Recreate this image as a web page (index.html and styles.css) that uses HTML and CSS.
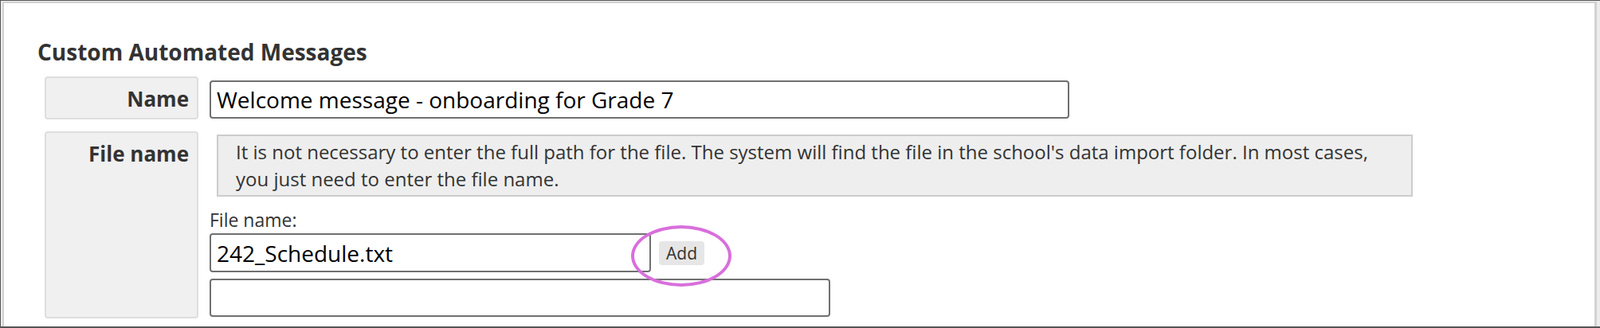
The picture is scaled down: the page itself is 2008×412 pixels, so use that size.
FILE: index.html
```html
<!DOCTYPE html>
<html lang="en">
<head>
    <meta charset="UTF-8">
    <title>Custom Automated Messages</title>
    <link rel="stylesheet" href="styles.css">
</head>
<body>
<div class="screen">
    <div class="panel">
        <h2 class="title">Custom Automated Messages</h2>
        <div class="form">
            <!--name row-->
            <div class="label name-label">Name</div>
            <div class="field name-field">
                <input type="text" class="text-input name-input" value="Welcome message - onboarding for Grade 7">
            </div>
            <!--file name row-->
            <div class="label file-label">File name</div>
            <div class="field file-field">
                <div class="hint">It is not necessary to enter the full path for the file. The system will find the file in the school's data import folder. In most cases, you just need to enter the file name.</div>
                <div class="sub-label">File name:</div>
                <div class="file-row">
                    <input type="text" class="text-input file-input" value="242_Schedule.txt">
                    <span class="add-wrap">
                        <button class="add-btn">Add</button>
                        <span class="ring"></span>
                    </span>
                </div>
                <input type="text" class="text-input extra-input" value="">
            </div>
        </div>
    </div>
</div>
</body>
</html>
```

FILE: styles.css
```css
*{
    margin: 0;
    padding: 0;
    box-sizing: border-box;
    font-family: "Open Sans", "Noto Sans", sans-serif;
}
body{
    background: #eeeeee;
    overflow: hidden;
}
.screen{
    width: 2008px;
    height: 412px;
    border-top: 1px solid #555;
    border-left: 1px solid #555;
    border-bottom: 2px solid #555;
    padding: 1px 0 0 2px;
    background: #ececec;
}
.panel{
    width: 2001px;
    height: 100%;
    background: #fff;
    border-top: 2px solid #d2d2d2;
    border-left: 2px solid #d2d2d2;
    border-right: 3px solid #d2d2d2;
    padding: 42px 0 0 42px;
}
.title{
    font-size: 28px;
    line-height: 39px;
    font-weight: 700;
    color: #333;
}
.form{
    display: grid;
    grid-template-columns: 193px 1fr;
    column-gap: 14px;
    row-gap: 15px;
    margin: 11px 0 0 9px;
}
.label{
    background: #f0f0f0;
    border: 2px solid #dedede;
    border-radius: 4px;
    text-align: right;
    padding: 13px 10px 0 0;
    font-size: 26px;
    line-height: 26px;
    font-weight: 700;
    color: #333;
}
.name-label{
    height: 54px;
}
.file-label{
    height: 235px;
}
.name-field{
    padding-top: 5px;
}
.text-input{
    display: block;
    height: 48px;
    border: 2px solid #707070;
    border-radius: 4px;
    padding: 0 7px;
    font-size: 28px;
    color: #000;
    background: #fff;
    outline: none;
}
.name-input{
    width: 1079px;
}
.file-field{
    padding-top: 4px;
}
.hint{
    width: 1501px;
    margin-left: 9px;
    background: #eeeeee;
    border: 2px solid #cccccc;
    padding: 3px 22px 0;
    height: 78px;
    font-size: 24px;
    line-height: 34px;
    color: #333;
}
.sub-label{
    margin-top: 12px;
    font-size: 23px;
    line-height: 34px;
    color: #333;
}
.file-row{
    display: flex;
    align-items: center;
    gap: 10px;
}
.file-input{
    width: 554px;
    height: 49px;
}
.add-wrap{
    position: relative;
    display: inline-block;
}
.add-btn{
    display: block;
    width: 57px;
    height: 30px;
    background: #e6e6e6;
    border: 0;
    border-radius: 4px;
    font-size: 21px;
    color: #333;
}
.ring{
    position: absolute;
    left: -35px;
    top: -20px;
    width: 126px;
    height: 77px;
    border: 4px solid #d86fdc;
    border-radius: 50%;
}
.extra-input{
    width: 779px;
    margin-top: 8px;
}
```
